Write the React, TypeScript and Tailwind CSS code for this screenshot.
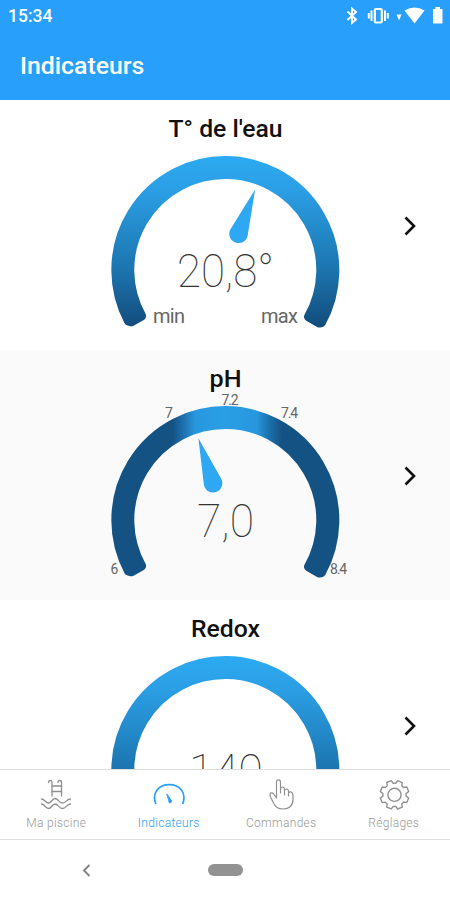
import React from 'react';

type Tick = { text: string; x: number; y: number; size: number; width: number };

type GaugeProps = {
  id: string;
  title: string;
  value: string;
  valueX: number;
  valueWidth: number;
  titleWidth: number;
  rotation?: number;
  ticks?: Tick[];
  shaded?: boolean;
};

const Gauge = ({ id, title, value, valueX, valueWidth, titleWidth, rotation, ticks = [], shaded }: GaugeProps) => (
  <section className={`relative h-[250px] shrink-0 flex flex-col items-center ${shaded ? 'bg-[#fafafa]' : 'bg-white'}`}>
    <h2 className="h-[50px] w-full">
      <svg className="w-full h-full" viewBox="0 0 450 50">
        <text
          x="225.500"
          y="37"
          textAnchor="middle"
          textLength={titleWidth}
          lengthAdjust="spacingAndGlyphs"
          className="text-[24.5px] font-medium fill-[#111]"
        >
          {title}
        </text>
      </svg>
    </h2>
    <svg className="w-[250px] h-[200px] overflow-visible" viewBox="0 0 250 200">
      <defs>
        {shaded ? (
          <linearGradient id={id} gradientUnits="userSpaceOnUse" x1="11" y1="0" x2="239" y2="0">
            <stop offset="0.27" stopColor="#155284" />
            <stop offset="0.31" stopColor="#1b6ca7" />
            <stop offset="0.37" stopColor="#2797de" />
            <stop offset="0.5" stopColor="#2a9fe6" />
            <stop offset="0.64" stopColor="#2797de" />
            <stop offset="0.7" stopColor="#1b6ca7" />
            <stop offset="0.75" stopColor="#155284" />
          </linearGradient>
        ) : (
          <linearGradient id={id} gradientUnits="userSpaceOnUse" x1="0" y1="6" x2="0" y2="178">
            <stop offset="0" stopColor="#2caaf2" />
            <stop offset="0.2" stopColor="#2b9ee4" />
            <stop offset="0.65" stopColor="#1c76b0" />
            <stop offset="1" stopColor="#134b7b" />
          </linearGradient>
        )}
      </defs>
      {/* ring, with softened corners at both ends */}
      <path
        d="M31.300 171.800 L28.500 171.200 A109.500 109.500 0 1 1 221.300 172.800 L219.300 173 L208.500 166.800 A95.500 95.500 0 1 0 41.600 166 Z"
        fill={`url(#${id})`}
        stroke={`url(#${id})`}
        strokeWidth="9"
        strokeLinejoin="round"
      />
      {rotation !== undefined && (
        <path
          transform={`rotate(${rotation} 125 120)`}
          d="M125 34 L134 79 A9.300 9.300 0 1 1 116 79 Z"
          className="fill-[#2ea8f2]"
        />
      )}
      <text
        x={valueX}
        y="137"
        textLength={valueWidth}
        lengthAdjust="spacingAndGlyphs"
        className="text-[46px] font-thin fill-[#333]"
      >
        {value}
      </text>
      {ticks.map((t) => (
        <text key={t.text} x={t.x} y={t.y} fontSize={t.size} textLength={t.width} className="fill-[#666]">
          {t.text}
        </text>
      ))}
    </svg>
    <svg className="absolute left-[402px] top-[115.5px] w-4 h-5" viewBox="0 0 16 20" fill="none" stroke="#111" strokeWidth="2.600">
      <path d="M3.500 1.500 L12 10 L3.500 18.500" />
    </svg>
  </section>
);

const StatusBar = () => (
  <div className="flex h-8 items-center justify-between pl-2">
    <span className="text-[17.5px] font-medium leading-8">15:34</span>
    <svg className="w-[110px] h-8" viewBox="340 0 110 32" fill="currentColor">
      <path d="M347.500 11.500 L356 19.500 L352 23 V8.500 L356 12 L347.500 20" fill="none" stroke="currentColor" strokeWidth="1.900" />
      <rect x="374.800" y="9" width="7" height="13.500" rx="1.200" fill="none" stroke="currentColor" strokeWidth="2.200" />
      <path d="M371.500 10.500 V21 M385 10.500 V21 M368.800 13 V18.500 M387.800 13 V18.500" stroke="currentColor" strokeWidth="2" />
      <path d="M396.500 14.500 H401.500 L399 20.500 Z" />
      <path d="M404.500 10.500 Q414.500 4.500 424.500 10.500 L414.500 23.500 Z" />
      <path d="M433 9 H435.500 V7 H440 V9 H442.500 V23.500 H433 Z" />
    </svg>
  </div>
);

const PoolIcon = () => (
  <svg className="w-8 h-8" viewBox="0 0 32 32" fill="none" stroke="currentColor" strokeWidth="1.300" strokeLinecap="round">
    <path d="M8.500 3.500 Q8.500 1.500 10.500 1.500 Q12 1.500 12 4 V17 M18 3.500 Q18 1.500 20 1.500 Q21.500 1.500 21.500 4 V17" />
    <path d="M12 7 H21.500 M12 12.500 H21.500" />
    <path d="M1.500 20 C4.500 20 5.500 24 8.500 24 C11.500 24 12 19.500 15 19.500 C18 19.500 19 24 22.500 24 C26 24 26.500 20 30.500 20" />
    <path d="M1.500 25 C4.500 25 5.500 29.500 8.500 29.500 C11.500 29.500 12 25 15 25 C18 25 19 29.500 22.500 29.500 C26 29.500 26.500 25 30.500 25" />
  </svg>
);

const MeterIcon = () => (
  <svg className="w-8 h-8" viewBox="0 0 32 32" fill="none" stroke="currentColor">
    <path d="M2.800 25 C-1.500 13.500 6 5.700 16.200 5.700 C26.500 5.700 34 13.500 29.700 25" strokeWidth="1.700" />
    <path d="M13.800 14.800 L18.600 22 Q18.500 24.500 16.300 23.800 Z" fill="currentColor" strokeWidth="0.900" />
  </svg>
);

const HandIcon = () => (
  <svg className="w-8 h-8" viewBox="0 0 32 32" fill="none" stroke="currentColor" strokeWidth="1.200" strokeLinecap="round" strokeLinejoin="round">
    <path d="M11.500 19 V3 Q11.500 .8 13.500 .8 Q15.500 .8 15.500 3 V14 V10 Q15.700 8 17.500 8 Q19.500 8 19.500 10.500 V16 V12 Q19.700 10 21.500 10 Q23.500 10.200 23.500 12.500 V17 V14.500 Q23.800 12.700 25.500 12.800 Q28 13.200 28 17 V20.500 C28 27 23.500 30 18.500 30 C12.500 30 10.500 28 8.500 24 L5.300 17.500 C4 13.500 7.500 12.500 9.500 16 L11.500 19" />
  </svg>
);

const GearIcon = () => (
  <svg className="w-8 h-8" viewBox="0 0 32 32" fill="none" stroke="currentColor" strokeWidth="1.400" strokeLinejoin="round">
    {/* eight teeth, rotated so that gaps sit on the vertical axis */}
    <g transform="translate(16.500 15.800)">
      <path
        transform="rotate(22.500)"
        d="M-2.500 -14.300 H2.500 L3.200 -11.200 Q4.500 -10.800 5.600 -10.200 L8.400 -11.900 L11.900 -8.400 L10.200 -5.600 Q10.800 -4.500 11.200 -3.200 L14.300 -2.500 V2.500 L11.200 3.200 Q10.800 4.500 10.200 5.600 L11.900 8.400 L8.400 11.900 L5.600 10.200 Q4.500 10.800 3.200 11.200 L2.500 14.300 H-2.500 L-3.200 11.200 Q-4.500 10.800 -5.600 10.200 L-8.400 11.900 L-11.900 8.400 L-10.200 5.600 Q-10.800 4.500 -11.200 3.200 L-14.300 2.500 V-2.500 L-11.200 -3.200 Q-10.800 -4.500 -10.200 -5.600 L-11.900 -8.400 L-8.400 -11.900 L-5.600 -10.200 Q-4.500 -10.800 -3.200 -11.200 Z"
      />
      <circle r="6.600" />
    </g>
  </svg>
);

const tabs = [
  { label: 'Ma piscine', icon: PoolIcon },
  { label: 'Indicateurs', icon: MeterIcon, active: true },
  { label: 'Commandes', icon: HandIcon },
  { label: 'Réglages', icon: GearIcon },
];

const App = () => {
  return (
    <div className="flex h-[900px] w-[450px] flex-col overflow-hidden bg-white font-[Roboto,sans-serif]">
      <header className="h-[100px] shrink-0 bg-[#279ffb] text-white">
        <StatusBar />
        <h1 className="pl-5 pt-[18px] text-[24.8px] font-medium leading-8">Indicateurs</h1>
      </header>

      <main className="flex h-[669px] shrink-0 flex-col overflow-hidden">
        <Gauge
          id="temperature"
          title="T° de l'eau"
          titleWidth={114}
          value="20,8°"
          valueX={77}
          valueWidth={97}
          rotation={20.500}
          ticks={[
            { text: 'min', x: 53, y: 173, size: 20, width: 32 },
            { text: 'max', x: 161, y: 173, size: 20, width: 37 },
          ]}
        />
        <Gauge
          id="ph"
          title="pH"
          titleWidth={32}
          value="7,0"
          valueX={97}
          valueWidth={57}
          rotation={-18}
          shaded
          ticks={[
            { text: '6', x: 10.500, y: 173.500, size: 14, width: 8 },
            { text: '7', x: 65, y: 18, size: 14, width: 8 },
            { text: '7.2', x: 121.500, y: 5, size: 14, width: 17 },
            { text: '7.4', x: 181, y: 18, size: 14, width: 17 },
            { text: '8.4', x: 230, y: 173.500, size: 14, width: 17 },
          ]}
        />
        <Gauge id="redox" title="Redox" titleWidth={69} value="140" valueX={89} valueWidth={74} />
      </main>

      <nav className="flex h-[71px] shrink-0 border-y border-[#dedede]">
        {tabs.map(({ label, icon: Icon, active }) => (
          <div
            key={label}
            className={`flex flex-1 flex-col items-center pt-[9px] ${active ? 'text-[#279ffb]' : 'text-[#909090]'}`}
          >
            <Icon />
            <span className={`mt-1 text-[12px] font-light leading-4 tracking-[0.3px] ${active ? 'text-[#279ffb]' : 'text-[#999]'}`}>
              {label}
            </span>
          </div>
        ))}
      </nav>

      <footer className="flex h-[60px] shrink-0 items-center pl-[80px]">
        <svg className="w-3 h-4" viewBox="0 0 12 16" fill="none" stroke="#858585" strokeWidth="2">
          <path d="M9.500 3 L4 8.500 L9.500 14" />
        </svg>
        <div className="ml-[116px] h-3 w-[35px] rounded-full bg-[#929292]" />
      </footer>
    </div>
  );
};

export default App;
